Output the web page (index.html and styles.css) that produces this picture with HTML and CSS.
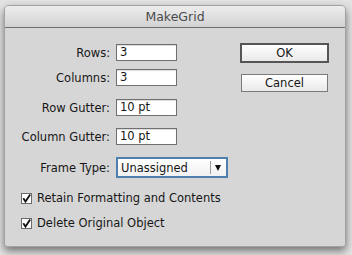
FILE: index.html
```html
<!DOCTYPE html>
<html lang="en">
<head>
    <meta charset="UTF-8">
    <title>MakeGrid</title>
    <link rel="stylesheet" href="styles.css">
</head>
<body>
    <div class="window">
        <div class="titlebar">MakeGrid</div>
        <div class="content">
            <div class="form">
                <div class="row row-rows">
                    <label class="label">Rows:</label>
                    <div class="field">3</div>
                </div>
                <div class="row row-columns">
                    <label class="label">Columns:</label>
                    <div class="field">3</div>
                </div>
                <div class="row row-gutter">
                    <label class="label">Row Gutter:</label>
                    <div class="field">10 pt</div>
                </div>
                <div class="row row-colgutter">
                    <label class="label">Column Gutter:</label>
                    <div class="field">10 pt</div>
                </div>
                <div class="row row-frame">
                    <label class="label">Frame Type:</label>
                    <div class="select">
                        <span class="select-value">Unassigned</span>
                        <span class="select-arrow"></span>
                    </div>
                </div>
                <div class="check check-first">
                    <span class="box">
                        <svg width="11" height="11" viewBox="0 0 11 11">
                            <path d="M2.3 5.2 L4.5 8.6 L9.2 1.6" fill="none" stroke="#111" stroke-width="1.8"/>
                        </svg>
                    </span>
                    <span>Retain Formatting and Contents</span>
                </div>
                <div class="check check-second">
                    <span class="box">
                        <svg width="11" height="11" viewBox="0 0 11 11">
                            <path d="M2.3 5.2 L4.5 8.6 L9.2 1.6" fill="none" stroke="#111" stroke-width="1.8"/>
                        </svg>
                    </span>
                    <span>Delete Original Object</span>
                </div>
            </div>
            <div class="actions">
                <button class="btn btn-default">OK</button>
                <button class="btn">Cancel</button>
            </div>
        </div>
    </div>
</body>
</html>
```

FILE: styles.css
```css
* {
    margin: 0;
    padding: 0;
    box-sizing: border-box;
}

body {
    font-family: 'DejaVu Sans', sans-serif;
    font-size: 11.5px;
    color: #161616;
    background: #e3e3e3;
    width: 352px;
    height: 255px;
    overflow: hidden;
}

.window {
    margin: 5px 0 0 4px;
    width: 342px;
    height: 242px;
    background: #d6d6d6;
    border: 1px solid #a2a2a2;
    border-radius: 5px 5px 3px 3px;
    box-shadow: 0 4px 9px rgba(0, 0, 0, 0.5);
    display: flex;
    flex-direction: column;
}

.titlebar {
    height: 22px;
    border-bottom: 1px solid #707070;
    border-radius: 4px 4px 0 0;
    background: linear-gradient(#ededed, #d2d2d2);
    text-align: center;
    line-height: 22px;
    font-size: 12.5px;
    color: #4b4b4b;
}

.content {
    display: flex;
    flex: 1;
}

.form {
    flex: 1;
    display: flex;
    flex-direction: column;
    padding-top: 16px;
}

.row {
    display: flex;
    align-items: center;
    gap: 6px;
}

.row-columns { margin-top: 8px; }
.row-gutter { margin-top: 13px; }
.row-colgutter { margin-top: 12px; }
.row-frame { margin-top: 12px; }

.label {
    width: 105px;
    text-align: right;
}

.field {
    width: 61px;
    height: 17px;
    background: #fff;
    border: 1px solid #6f6f6f;
    box-shadow: inset 0 1px 1px rgba(0, 0, 0, 0.15);
    padding-left: 3px;
    line-height: 15px;
}

.select {
    width: 112px;
    height: 21px;
    background: linear-gradient(#ffffff, #f1f1f1);
    border: 2px solid #4f7fae;
    display: flex;
    align-items: center;
}

.select-value {
    flex: 1;
    padding-left: 3px;
}

.select-arrow {
    width: 16px;
    height: 13px;
    border-left: 1px solid #9a9a9a;
    position: relative;
}

.select-arrow::after {
    content: '';
    position: absolute;
    left: 4px;
    top: 4px;
    border-left: 3.5px solid transparent;
    border-right: 3.5px solid transparent;
    border-top: 6px solid #111;
}

.check {
    display: flex;
    align-items: center;
    gap: 5px;
    padding-left: 16px;
}

.check-first {
    margin-top: 13px;
}

.check-second {
    margin-top: 11px;
}

.box {
    width: 11px;
    height: 11px;
    background: #fff;
    border: 1px solid #6a6a6a;
    display: flex;
}

.box svg {
    margin: -1px;
}

.actions {
    width: 89px;
    margin-right: 16px;
    padding-top: 15px;
    display: flex;
    flex-direction: column;
    align-items: center;
    gap: 11px;
}

.btn {
    font-family: 'DejaVu Sans', sans-serif;
    font-size: 11.5px;
    color: #161616;
    width: 87px;
    height: 18px;
    border: 1px solid #7a7a7a;
    background: linear-gradient(#ffffff, #e9e9e9);
}

.btn-default {
    width: 89px;
    height: 20px;
    border: 2px solid #555;
}
```
